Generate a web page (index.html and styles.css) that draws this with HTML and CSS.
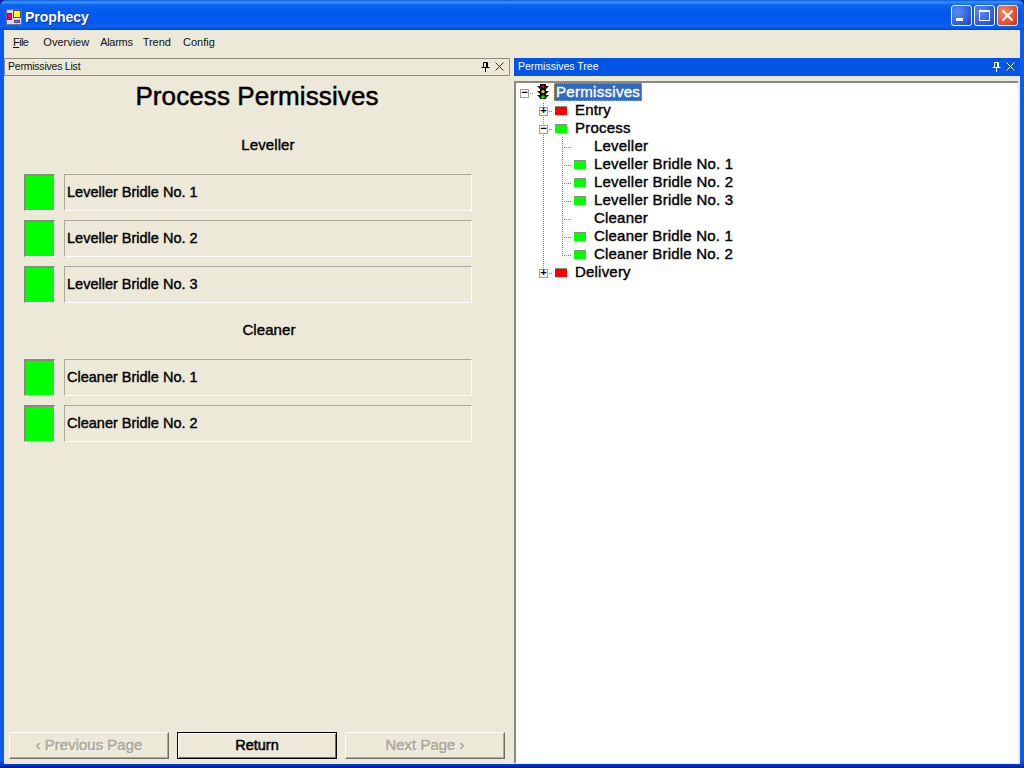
FILE: index.html
```html
<!DOCTYPE html>
<html lang="en">
<head>
<meta charset="utf-8">
<title>Prophecy</title>
<link rel="stylesheet" href="styles.css">
</head>
<body>
<div class="window">
  <header class="titlebar">
    <svg class="app-icon" width="16" height="16" viewBox="0 0 16 16"><rect x="0" y="0" width="16" height="16" fill="#6b6f9c"/><rect x="1" y="1" width="14" height="14" fill="#d8d8e8"/><rect x="1.5" y="4.5" width="4" height="6" fill="#f0006a" stroke="#3030a0" stroke-width="1"/><rect x="7.5" y="1.5" width="7" height="7" fill="#ffff00" stroke="#404080" stroke-width="1"/><rect x="8.5" y="11.5" width="5" height="2" fill="#00d8e0" stroke="#404080" stroke-width="1"/></svg>
    <span class="title-text">Prophecy</span>
    <div class="caption-buttons">
      <span class="cap-btn"><svg width="21" height="21" viewBox="0 0 21 21"><rect x="5" y="13" width="7" height="3" fill="#fff"/></svg></span>
      <span class="cap-btn"><svg width="21" height="21" viewBox="0 0 21 21"><rect x="5.5" y="5.5" width="10" height="10" fill="none" stroke="#fff"/><rect x="5" y="5" width="11" height="2" fill="#fff"/></svg></span>
      <span class="cap-btn cap-close"><svg width="21" height="21" viewBox="0 0 21 21"><path d="M5.5 5.5l10 10M15.5 5.5l-10 10" stroke="#fff" stroke-width="2.2" fill="none"/></svg></span>
    </div>
  </header>
  <div class="client">
    <nav class="menu">
      <span class="menu-item"><u>F</u>ile</span>
      <span class="menu-item">Overview</span>
      <span class="menu-item">Alarms</span>
      <span class="menu-item">Trend</span>
      <span class="menu-item">Config</span>
    </nav>
    <div class="panes">
      <section class="pane-left">
        <div class="pane-head pane-head-idle">
          <span class="pane-title">Permissives List</span>
          <svg class="pin" width="11" height="11" viewBox="0 0 11 11"><path d="M3.5 1.5h4v5h-4zM6.5 1.5v5M1.5 6.5h8M5.5 7v4" fill="none" stroke="#000"/></svg>
          <svg class="close" width="9" height="9" viewBox="0 0 9 9"><path d="M.5.5l8 8M8.5.5l-8 8" stroke="#333" fill="none"/></svg>
        </div>
        <div class="list">
          <h1 class="list-title">Process Permissives</h1>
          <h2 class="group-title">Leveller</h2>
          <div class="row"><span class="lamp"></span><span class="label">Leveller Bridle No. 1</span></div>
          <div class="row"><span class="lamp"></span><span class="label">Leveller Bridle No. 2</span></div>
          <div class="row"><span class="lamp"></span><span class="label">Leveller Bridle No. 3</span></div>
          <h2 class="group-title group-second">Cleaner</h2>
          <div class="row"><span class="lamp"></span><span class="label">Cleaner Bridle No. 1</span></div>
          <div class="row"><span class="lamp"></span><span class="label">Cleaner Bridle No. 2</span></div>
          <div class="buttons">
            <button class="btn" disabled>‹ Previous Page</button>
            <button class="btn btn-default">Return</button>
            <button class="btn" disabled>Next Page ›</button>
          </div>
        </div>
      </section>
      <section class="pane-right">
        <div class="pane-head pane-head-active">
          <span class="pane-title">Permissives Tree</span>
          <svg class="pin" width="11" height="11" viewBox="0 0 11 11"><path d="M3.5 1.5h4v5h-4zM6.5 1.5v5M1.5 6.5h8M5.5 7v4" fill="none" stroke="#fff"/></svg>
          <svg class="close" width="9" height="9" viewBox="0 0 9 9"><path d="M.5.5l8 8M8.5.5l-8 8" stroke="#fff" fill="none"/></svg>
        </div>
        <div class="tree">
          <div class="node">
            <span class="cell"><span class="h-stub"></span><span class="box">−</span></span>
            <span class="icon-cell"><svg width="14" height="18" viewBox="0 0 14 18"><path d="M4 1h6v15H4z" fill="#000"/><path d="M1 3h12L10 6H4zM1 8h12l-3 3H4zM1 12h12l-3 3H4z" fill="#111"/><circle cx="7" cy="3.5" r="1.6" fill="#e00000"/><circle cx="7" cy="8.5" r="1.6" fill="#e8e000"/><circle cx="7" cy="14" r="1.8" fill="#00f000"/></svg></span>
            <span class="selected">Permissives</span>
          </div>
          <div class="node">
            <span class="cell"></span>
            <span class="cell"><span class="v-line v-first"></span><span class="h-stub"></span><span class="box">+</span></span>
            <span class="icon-cell"><span class="led led-red"></span></span>
            <span class="node-text">Entry</span>
          </div>
          <div class="node">
            <span class="cell"></span>
            <span class="cell"><span class="v-line"></span><span class="h-stub"></span><span class="box">−</span></span>
            <span class="icon-cell"><span class="led led-green"></span></span>
            <span class="node-text">Process</span>
          </div>
          <div class="node">
            <span class="cell"></span><span class="cell"><span class="v-line"></span></span>
            <span class="cell"><span class="v-line"></span><span class="h-stub"></span></span>
            <span class="icon-cell"></span><span class="node-text">Leveller</span>
          </div>
          <div class="node">
            <span class="cell"></span><span class="cell"><span class="v-line"></span></span>
            <span class="cell"><span class="v-line"></span><span class="h-stub"></span></span>
            <span class="icon-cell"><span class="led led-green"></span></span><span class="node-text">Leveller Bridle No. 1</span>
          </div>
          <div class="node">
            <span class="cell"></span><span class="cell"><span class="v-line"></span></span>
            <span class="cell"><span class="v-line"></span><span class="h-stub"></span></span>
            <span class="icon-cell"><span class="led led-green"></span></span><span class="node-text">Leveller Bridle No. 2</span>
          </div>
          <div class="node">
            <span class="cell"></span><span class="cell"><span class="v-line"></span></span>
            <span class="cell"><span class="v-line"></span><span class="h-stub"></span></span>
            <span class="icon-cell"><span class="led led-green"></span></span><span class="node-text">Leveller Bridle No. 3</span>
          </div>
          <div class="node">
            <span class="cell"></span><span class="cell"><span class="v-line"></span></span>
            <span class="cell"><span class="v-line"></span><span class="h-stub"></span></span>
            <span class="icon-cell"></span><span class="node-text">Cleaner</span>
          </div>
          <div class="node">
            <span class="cell"></span><span class="cell"><span class="v-line"></span></span>
            <span class="cell"><span class="v-line"></span><span class="h-stub"></span></span>
            <span class="icon-cell"><span class="led led-green"></span></span><span class="node-text">Cleaner Bridle No. 1</span>
          </div>
          <div class="node">
            <span class="cell"></span><span class="cell"><span class="v-line"></span></span>
            <span class="cell"><span class="v-line v-last"></span><span class="h-stub"></span></span>
            <span class="icon-cell"><span class="led led-green"></span></span><span class="node-text">Cleaner Bridle No. 2</span>
          </div>
          <div class="node">
            <span class="cell"></span>
            <span class="cell"><span class="v-line v-last"></span><span class="h-stub"></span><span class="box">+</span></span>
            <span class="icon-cell"><span class="led led-red"></span></span>
            <span class="node-text">Delivery</span>
          </div>
        </div>
      </section>
    </div>
  </div>
</div>
</body>
</html>
```
FILE: styles.css
```css
* { box-sizing: border-box; }
html, body { margin: 0; padding: 0; }
body { width: 1024px; height: 768px; overflow: hidden; background: #0a2a9a; font-family: "Liberation Sans", Arial, sans-serif; }

.window {
  width: 1024px; height: 768px; display: flex; flex-direction: column;
  border-radius: 7px 7px 0 0; overflow: hidden;
  background: linear-gradient(180deg, #0a5cf0 0, #0a5cf0 760px, #0a3fd0 764px, #001a90 768px);
}
.titlebar {
  height: 30px; flex: none; display: flex; align-items: center; padding: 3px 6px 0;
  background: linear-gradient(180deg, #0a57d8 0, #3a93ff 2px, #0a64f0 5px, #0058ee 12px, #0258ee 22px, #0a66f4 26px, #0048d8 30px);
}
.app-icon { flex: none; }
.title-text { margin-left: 3px; color: #fff; font-size: 14px; font-weight: 700; text-shadow: 1px 1px 0 #0f2f9a; }
.caption-buttons { margin-left: auto; margin-top: -3px; margin-right: 0; display: flex; gap: 2px; }
.cap-btn {
  width: 21px; height: 21px; display: block; border: 1px solid #fff; border-radius: 3px;
  background: radial-gradient(circle at 30% 30%, #5f8df0, #2a55d8 75%, #1c3fb8);
}
.cap-btn svg { display: block; margin: -1px; }
.cap-close { background: radial-gradient(circle at 30% 30%, #ee8a6a, #dd4a25 70%, #b8300f); }

.client {
  flex: 1; min-height: 0; margin: 0 4px 4px; background: #ece9d8;
  display: flex; flex-direction: column;
}
.menu { height: 28px; flex: none; display: flex; align-items: center; padding: 0 0 2px 3px; font-size: 11px; color: #111; }
.menu-item { padding: 0 6px 2px; margin-right: -1px; }
.menu-item u { text-decoration-thickness: 1px; }
.menu-item:first-child { padding-left: 6px; margin-right: 3px; letter-spacing: -.6px; }
.menu-item:nth-child(3) { margin-right: -2px; letter-spacing: -.3px; }
.menu-item:nth-child(4) { margin-right: 0; }

.panes { flex: 1; min-height: 0; display: flex; }
.pane-left { width: 510px; flex: none; display: flex; flex-direction: column; }
.pane-right { flex: 1; min-width: 0; display: flex; flex-direction: column; }

.pane-head { height: 18px; flex: none; display: flex; align-items: center; font-size: 10.5px; padding-bottom: 2px; }
.pane-title { flex: 1; }
.pin { margin-right: 4px; }
.close { margin-right: 5px; }
.pane-head-idle { width: 506px; color: #111; border: 1px solid #8a8a80; border-radius: 1px; padding-left: 3px; }
.pane-head-idle .pane-title { letter-spacing: -.22px; }
.pane-head-active { background: #0055e5; color: #fff; padding-left: 4px; }

.list { flex: 1; min-height: 0; display: flex; flex-direction: column; padding: 0 0 5px 0; color: #000; }
.list-title { margin: 5px 0 0; width: 506px; height: 30px; text-align: center; font-size: 26px; line-height: 30px; font-weight: 400; letter-spacing: .1px; -webkit-text-stroke: .5px #000; }
.group-title { margin: 24px 0 0; width: 528px; height: 20px; text-align: center; font-size: 15px; line-height: 20px; font-weight: 400; letter-spacing: .1px; -webkit-text-stroke: .4px #000; }
.group-title + .row { margin-top: 19px; }
.group-second { margin-top: 8px; width: 530px; }
.group-second + .row { margin-top: 19px; }
.row { display: flex; height: 37px; margin: 0 0 9px 20px; flex: none; }
.lamp { width: 31px; height: 37px; background: #00ff00; border: solid; border-width: 2px 1px 1px 2px; border-color: #8a8a80 #fff #fff #8a8a80; }
.label {
  width: 408px; margin-left: 9px; height: 37px; padding: 0 0 1px 2px; display: flex; align-items: center;
  font-size: 14.5px; -webkit-text-stroke: .4px #000; border: 1px solid; border-color: #aca899 #fff #fff #aca899;
}

.buttons { margin-top: auto; display: flex; gap: 8px; padding-left: 5px; }
.btn {
  width: 160px; height: 27px; padding: 0 0 2px; background: #ece9d8; font: 400 15px "Liberation Sans", Arial, sans-serif;
  -webkit-text-stroke: .5px currentColor; border: 1px solid; border-color: #fff #716f64 #716f64 #fff; box-shadow: inset -1px -1px 0 #aca899;
}
.btn[disabled] { color: #aca899; text-shadow: 1px 1px 0 #fff; }
.btn-default { color: #000; font-size: 14.5px; border-color: #000; box-shadow: inset 1px 1px 0 #fff, inset -1px -1px 0 #716f64; }

.tree {
  flex: 1; min-height: 0; margin: 5px 2px 1px 0; background: #fff;
  border-top: 2px solid #8a8a80; border-left: 2px solid #8a8a80;
  font-size: 15px; color: #000;
}
.node { height: 18px; display: flex; align-items: center; margin-left: -1px; }
.cell { width: 19px; height: 18px; flex: none; position: relative; }
.icon-cell { width: 19px; height: 18px; flex: none; padding-left: 2px; display: flex; align-items: center; }
.v-line { position: absolute; left: 9px; top: 0; bottom: 0; width: 1px; background: repeating-linear-gradient(180deg, #808080 0 1px, transparent 1px 2px); }
.v-first { top: 2px; }
.v-last { bottom: 8px; }
.h-stub { position: absolute; left: 9px; width: 10px; top: 10px; height: 1px; background: repeating-linear-gradient(90deg, #808080 0 1px, transparent 1px 2px); }
.box {
  position: absolute; left: 5px; top: 6px; width: 9px; height: 9px; border: 1px solid #a0a090; background: #fff;
  display: flex; align-items: center; justify-content: center; font: 700 11px/7px "Liberation Mono", monospace; color: #000;
}
.led { width: 12px; height: 9px; display: block; border-top: 1px solid #8a8a80; margin-top: 1px; }
.led-red { background: #ff0000; }
.led-green { background: #00ff00; }
.node-text { margin-left: 3px; margin-top: -2px; letter-spacing: .2px; -webkit-text-stroke: .4px #000; white-space: nowrap; }
.selected {
  margin-left: 1px; height: 18px; padding: 0 2px; line-height: 17px; background: #316ac5; color: #fff; outline: 1px dotted #c8a040; outline-offset: -1px;
  letter-spacing: .3px; -webkit-text-stroke: .4px #fff;
}
```
